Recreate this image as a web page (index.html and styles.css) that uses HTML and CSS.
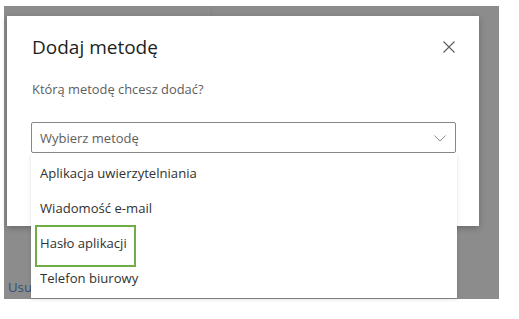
FILE: index.html
```html
<!DOCTYPE html>
<html lang="pl">
<head>
<meta charset="utf-8">
<link rel="stylesheet" href="styles.css">
</head>
<body>
<div class="backdrop">
  <div class="page-line"></div>
  <div class="dialog">
    <div class="dialog-head">
      <h1 class="title">Dodaj metodę</h1>
      <button class="close" aria-label="Zamknij">
        <svg width="12" height="12" viewBox="0 0 12 12"><path d="M0.5 0.5 L11.5 11.5 M11.5 0.5 L0.5 11.5" stroke="#605e5c" stroke-width="1.1" fill="none"/></svg>
      </button>
    </div>
    <p class="question">Którą metodę chcesz dodać?</p>
    <div class="select-wrap">
      <div class="select">
        <span class="placeholder">Wybierz metodę</span>
        <svg class="chevron" width="12" height="7" viewBox="0 0 12 7"><path d="M0.5 0.5 L6 6 L11.5 0.5" stroke="#8a8886" stroke-width="1" fill="none"/></svg>
      </div>
      <ul class="menu">
        <li class="item">Aplikacja uwierzytelniania</li>
        <li class="item">Wiadomość e-mail</li>
        <li class="item">Hasło aplikacji</li>
        <li class="item">Telefon biurowy</li>
      </ul>
      <div class="highlight"></div>
    </div>
  </div>
  <div class="link">Usuń</div>
</div>
</body>
</html>
```
FILE: styles.css
```css
* { box-sizing: border-box; }
html, body { margin: 0; padding: 0; background: #ffffff; }
body {
  width: 519px;
  height: 319px;
  overflow: hidden;
  font-family: "Segoe UI", "Open Sans", "Noto Sans", sans-serif;
  color: #323130;
}
.backdrop {
  position: relative;
  margin: 6px 0 0 4px;
  width: 495px;
  height: 293px;
  background: #8c8c8c;
  padding: 10px 0 0 3px;
}
.page-line {
  position: absolute;
  left: 207px;
  top: 0;
  width: 1px;
  height: 100%;
  background: #868686;
}
.dialog {
  position: relative;
  width: 472px;
  height: 210px;
  background: #ffffff;
  box-shadow: 0 2px 6px rgba(0,0,0,0.25);
  padding: 16px 23px 0 25px;
}
.dialog-head {
  display: flex;
  justify-content: space-between;
  align-items: center;
  height: 30px;
}
.title {
  margin: 0;
  font-size: 19px;
  font-weight: 400;
  color: #201f1e;
  letter-spacing: 0;
}
.close {
  border: 0;
  background: transparent;
  padding: 0;
  margin-right: 1px;
  width: 12px;
  height: 12px;
  display: flex;
}
.question {
  margin: 18px 0 0 0;
  font-size: 12.9px;
  color: #605e5c;
  line-height: 18px;
}
.select-wrap {
  position: relative;
  margin: 24px 0 0 -1px;
}
.select {
  height: 31px;
  border: 1px solid #8a8886;
  border-radius: 2px;
  display: flex;
  align-items: center;
  justify-content: space-between;
  padding: 0 9px 0 8px;
}
.placeholder {
  font-size: 13px;
  color: #605e5c;
}
.chevron { display: block; margin-top: 1px; }
.menu {
  position: absolute;
  left: 0;
  top: 31px;
  width: 426px;
  margin: 0;
  padding: 2px 0 3px 0;
  list-style: none;
  background: #ffffff;
  box-shadow: 0 1.6px 3.6px rgba(0,0,0,0.13), 0 0.3px 0.9px rgba(0,0,0,0.11);
  z-index: 2;
}
.item {
  height: 35px;
  display: flex;
  align-items: center;
  padding-left: 9px;
  font-size: 13.1px;
  color: #323130;
}
.highlight {
  position: absolute;
  left: 4px;
  top: 103px;
  width: 101px;
  height: 42px;
  border: 2px solid #70ad47;
  z-index: 3;
}
.link {
  margin: 52px 0 0 1px;
  font-size: 13.2px;
  color: #2e4f78;
}
```
